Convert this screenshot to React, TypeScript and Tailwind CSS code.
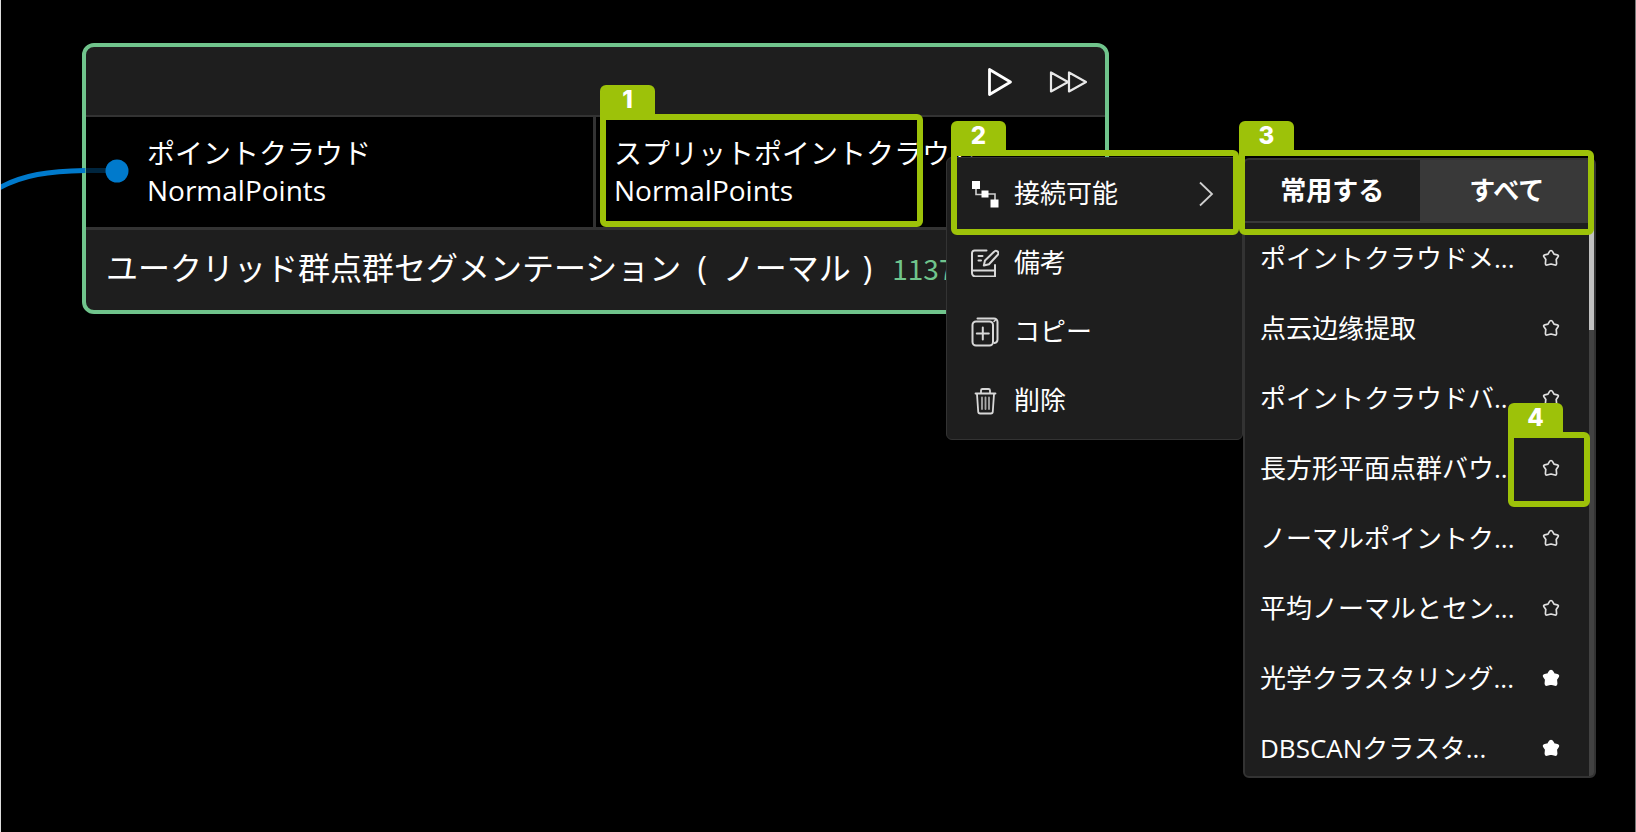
import type { ReactNode } from "react"
import { clsx } from "clsx"

interface MenuItem {
  id: string
  label: string
  icon: ReactNode
  hasChildren?: boolean
}

interface Operator {
  name: string
  starred?: boolean
}

interface CalloutProps {
  step: number
  className: string
}

const LinkIcon = () => (
  <svg viewBox="0 0 28 28" className="size-7" fill="none" stroke="#d0d0d0" strokeWidth="1.6">
    <path d="M5 7v7.500h9M14 14h10v9" />
    <path d="M1 1h8v8H1zM10.500 10.500h7v7h-7zM19.500 19.500h8v8h-8z" fill="#fff" stroke="none" />
  </svg>
)

const NoteIcon = () => (
  <svg viewBox="0 0 28 28" className="size-7" fill="none" stroke="#d8d8d8" strokeWidth="2" strokeLinecap="round" strokeLinejoin="round">
    <path d="M15.500 1.500H3.500a2.500 2.500 0 0 0-2.500 2.500v20a3.500 3.500 0 0 0 3.500 3.500H24V16" />
    <path d="M1.500 21.500h22M7.500 7h4M7.500 11.500h2.500" />
    <path d="M12.800 16.500l1.200-5 9-8.700a2.300 2.300 0 0 1 3.800 3L18 15.300z" />
  </svg>
)

const CopyIcon = () => (
  <svg viewBox="0 0 28 30" className="h-[30px] w-7" fill="none" stroke="#d8d8d8" strokeWidth="2" strokeLinecap="round" strokeLinejoin="round">
    <rect x="1.500" y="4.500" width="20.500" height="24" rx="3.500" />
    <path d="M6.500 1.500h16.500a3.500 3.500 0 0 1 3.500 3.500V22.500a3.500 3.500 0 0 1-3 3.500" />
    <path d="M23 4.500l2-2" strokeWidth="1.500" />
    <path d="M11.800 10.500v12M5.800 16.500h12" />
  </svg>
)

const TrashIcon = () => (
  <svg viewBox="0 0 28 28" className="size-7" fill="none" stroke="#d8d8d8" strokeWidth="1.8" strokeLinecap="round" strokeLinejoin="round">
    <path d="M4.500 6.500h20M10 6V3.500a1.500 1.500 0 0 1 1.500-1.500h6A1.500 1.500 0 0 1 19 3.500V6" />
    <path d="M6 7l1.200 17.500a2 2 0 0 0 2 2h10.600a2 2 0 0 0 2-2L23 7" />
    <path d="M11 10.500v11.500M14.500 10.500v11.500M18 10.500v11.500" stroke="#a8a8a8" />
  </svg>
)

const StarIcon = ({ filled }: { filled?: boolean }) => (
  <svg viewBox="0 0 18 18" className="size-[18px]" fill={filled ? "#fff" : "none"} stroke={filled ? "#fff" : "#e0e0e0"} strokeWidth="1.700" strokeLinejoin="round">
    <path d="M9 1.500Q10 1.500 10.600 2.700L12 5.200 15.200 5.800Q16.800 6.300 16.200 7.500L14.200 10.500 14.600 14.500Q14.500 16.400 13 16L9 15 5 16Q3.500 16.400 3.400 14.500L3.800 10.500 1.800 7.500Q1.200 6.300 2.800 5.800L6 5.200 7.400 2.700Q8 1.500 9 1.500z" />
  </svg>
)

const menuItems: MenuItem[] = [
  { id: "connect", label: "接続可能", icon: <LinkIcon />, hasChildren: true },
  { id: "note", label: "備考", icon: <NoteIcon /> },
  { id: "copy", label: "コピー", icon: <CopyIcon /> },
  { id: "delete", label: "削除", icon: <TrashIcon /> },
]

const operators: Operator[] = [
  { name: "ポイントクラウドメ..." },
  { name: "点云边缘提取" },
  { name: "ポイントクラウドバ..." },
  { name: "長方形平面点群バウ..." },
  { name: "ノーマルポイントク..." },
  { name: "平均ノーマルとセン..." },
  { name: "光学クラスタリング...", starred: true },
  { name: "DBSCANクラスタ...", starred: true },
]

const Callout = ({ step, className }: CalloutProps) => (
  <div className={clsx("pointer-events-none absolute rounded-md rounded-tl-none border-6 border-[#9dc209]", className)}>
    <span className="absolute -top-[35px] -left-1.5 flex h-[30px] w-[55px] items-center justify-center rounded-t-md bg-[#9dc209] font-['Inter'] text-2xl font-extrabold text-white">
      {step}
    </span>
  </div>
)

const Port = ({ title, type }: { title: string; type: string }) => (
  <div className="text-[28px] leading-[37px] whitespace-nowrap">
    <p>{title}</p>
    <p className="font-medium">{type}</p>
  </div>
)

const GraphNode = () => (
  <article className="absolute top-[43px] left-[82px] w-[1027px] overflow-hidden rounded-xl border-4 border-[#70c48c] bg-[#1e1e1e]">
    <header className="flex h-[70px] items-center justify-end gap-9 border-b-2 border-[#333] pt-0.5 pr-[18px]">
      <button type="button" aria-label="Run">
        <svg viewBox="0 0 26 30" className="h-[30px] w-[26px]" fill="none" stroke="#fff" strokeWidth="2.800" strokeLinejoin="round">
          <path d="M2.500 2.500v25L23.500 15z" />
        </svg>
      </button>
      <button type="button" aria-label="Run from here">
        <svg viewBox="0 0 38 22" className="h-[22px] w-[38px]" fill="none" stroke="#e8e8e8" strokeWidth="2.200" strokeLinejoin="round">
          <path d="M2 1.500v19L19 11zM20 1.500v19L37 11z" />
        </svg>
      </button>
    </header>
    <div className="flex h-[113px] border-b-3 border-[#333] bg-black">
      <div className="flex w-[510px] items-center border-r-3 border-[#333] pl-[61px]">
        <Port title="ポイントクラウド" type="NormalPoints" />
      </div>
      <div className="flex flex-1 items-center pl-[18px]">
        <Port title="スプリットポイントクラウド" type="NormalPoints" />
      </div>
    </div>
    <footer className="flex h-20 items-center gap-5 pb-1 pl-5 whitespace-nowrap">
      <h2 className="text-[32px]">
        ユークリッド群点群セグメンテーション<span className="mx-4">(</span>ノーマル<span className="ml-3">)</span>
      </h2>
      <span className="font-['Noto_Sans_CJK_JP'] text-[28px] text-[#70c48c]">1137</span>
    </footer>
  </article>
)

const ContextMenu = () => (
  <ul className="absolute top-[157px] left-[946px] w-[297px] rounded-md border border-[#333] bg-[#1e1e1e] pt-px pb-1 text-[26px]">
    {menuItems.map((item) => (
      <li key={item.id}>
        <button type="button" className="flex h-[69px] w-full items-center pr-7 pl-6">
          <span className="flex w-7 justify-center">{item.icon}</span>
          <span className="ml-[15px]">{item.label}</span>
          {item.hasChildren && (
            <svg viewBox="0 0 16 26" className="ml-auto h-[26px] w-4" fill="none" stroke="#d0d0d0" strokeWidth="1.800">
              <path d="M2 1.500L14 13 2 24.500" />
            </svg>
          )}
        </button>
      </li>
    ))}
  </ul>
)

const OperatorMenu = () => (
  <section className="absolute top-[158px] left-[1243px] w-[353px] overflow-hidden rounded-md border-2 border-[#333] bg-[#1e1e1e] text-[26px]">
    <div role="tablist" className="flex h-[63px] border-b-2 border-[#393939] font-bold">
      <button type="button" role="tab" aria-selected="false" className="flex-1">
        常用する
      </button>
      <button type="button" role="tab" aria-selected="true" className="flex-1 bg-[#393939]">
        すべて
      </button>
    </div>
    <div className="flex h-[553px] overflow-hidden">
      <ul className="flex-1">
        {operators.map((operator) => (
          <li key={operator.name} className="flex h-[70px] items-center justify-between pr-[29px] pl-[15px]">
            <span className="whitespace-nowrap">{operator.name}</span>
            <button type="button" aria-label="Favorite">
              <StarIcon filled={operator.starred} />
            </button>
          </li>
        ))}
      </ul>
      <div className="w-[5px] bg-[#424242]">
        <div className="h-[107px] bg-[#c1c1c1]" />
      </div>
    </div>
  </section>
)

export default function App() {
  return (
    <main className="relative h-screen overflow-hidden border-r border-l border-r-[#777] border-l-[#ddd] bg-black font-['Open_Sans','Noto_Sans_CJK_JP',sans-serif] text-white">
      <div className="absolute inset-y-0 -left-px w-[1600px]">
        <GraphNode />
        <svg viewBox="0 0 140 60" className="absolute top-[150px] left-px h-[60px] w-[140px]" fill="none">
          <path d="M-2 38C22 25 48 21 84 20.500" stroke="#007acc" strokeWidth="5" />
          <path d="M84 20.500h22" stroke="#007acc" strokeWidth="5" opacity="0.3" />
          <circle cx="116" cy="21" r="11.500" fill="#007acc" />
        </svg>
        <ContextMenu />
        <OperatorMenu />
        <Callout step={1} className="top-[114px] left-[600px] h-[113px] w-[323px]" />
        <Callout step={2} className="top-[150px] left-[951px] h-[85px] w-[288px]" />
        <Callout step={3} className="top-[150px] left-[1239px] h-[85px] w-[355px]" />
        <Callout step={4} className="top-[432px] left-[1508px] h-[75px] w-[82px]" />
      </div>
    </main>
  )
}
